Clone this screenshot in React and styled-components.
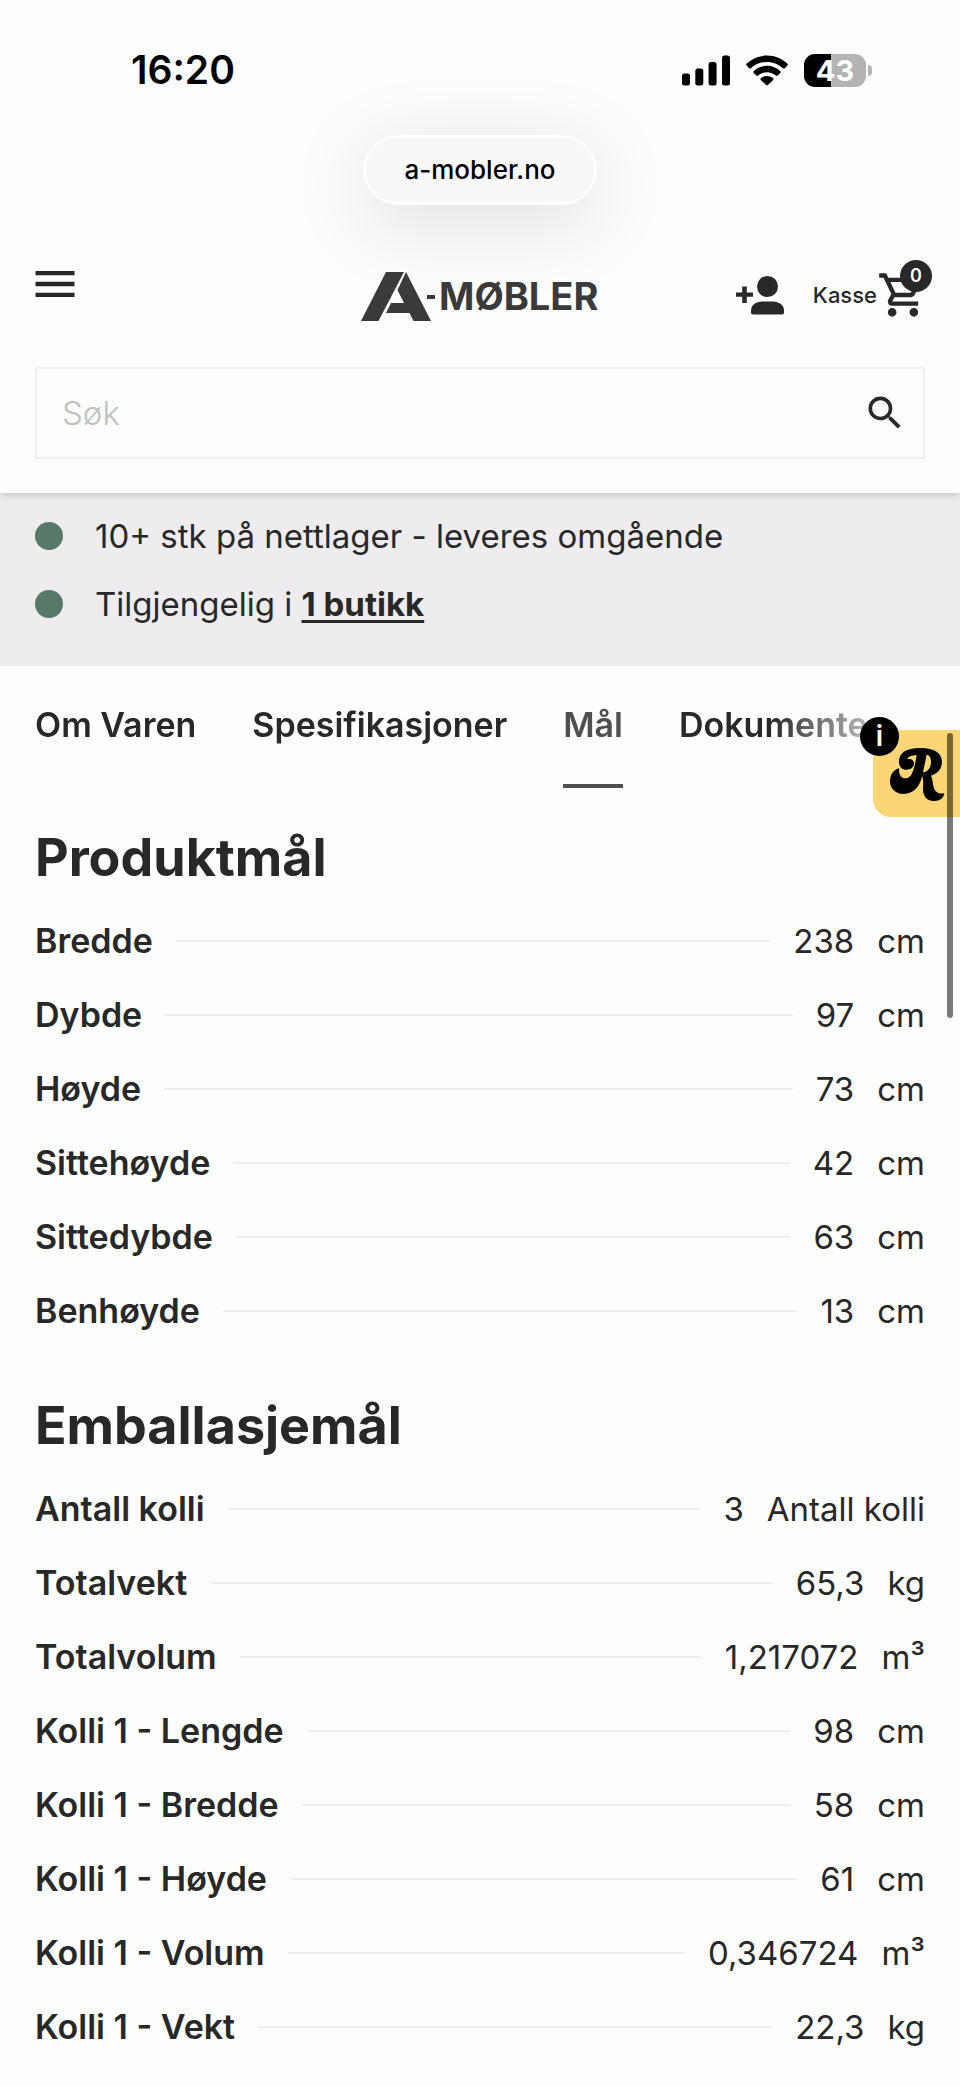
import React from "react";
import styled, { createGlobalStyle } from "styled-components";
import { MdMenu, MdOutlineShoppingCart, MdSearch } from "react-icons/md";

const color = {
    page: "#fdfdfd",
    ink: "#282828",
    muted: "#4f4f4f",
    placeholder: "#c0c0c0",
    line: "#efeff0",
    stock: "#eeecef",
    green: "#557869",
    yellow: "#fcd676",
    black: "#000000",
    white: "#ffffff",
};

const GlobalStyle = createGlobalStyle`
    *, *::before, *::after {
        box-sizing: border-box;
    }

    body {
        margin: 0;
        background-color: ${color.page};
        color: ${color.ink};
        font-family: Inter, "Liberation Sans", sans-serif;
        font-size: 33px;
        line-height: 40px;
    }

    button, input {
        font: inherit;
        color: inherit;
    }
`;

const Page = styled.div`
    position: relative;
    overflow: hidden;
`;

/** Phone status bar with the clock and the indicators. */
const StatusBar = styled.div`
    display: flex;
    align-items: center;
    justify-content: space-between;
    height: 140px;
    padding: 0 88px 0 131px;
`;

const Clock = styled.time`
    color: ${color.black};
    font-size: 39px;
    font-weight: 600;
`;

const Indicators = styled.div`
    display: flex;
    align-items: center;
    gap: 16px;
`;

const Battery = styled.div`
    display: flex;
    align-items: center;
    gap: 2px;

    &::after {
        content: "";
        width: 4px;
        height: 11px;
        border-radius: 0 6px 6px 0;
        background-color: #b4b4b4;
    }
`;

const BatteryLevel = styled.span`
    width: 62px;
    height: 33px;
    border-radius: 11px;
    background: linear-gradient(
        to right,
        ${color.black} ${(props) => props.$level}%,
        #b4b4b4 ${(props) => props.$level}%
    );
    color: ${color.white};
    font-size: 29px;
    font-weight: 700;
    line-height: 33px;
    text-align: center;
`;

/** Floating address pill of the browser. */
const AddressBar = styled.div`
    display: flex;
    justify-content: center;
    margin-top: -5px;
`;

const Address = styled.span`
    padding: 12px 38px;
    border: 3px solid ${color.white};
    border-radius: 35px;
    background-color: #f8f8f8;
    box-shadow: 0 16px 80px rgba(0, 0, 0, 0.13);
    color: ${color.black};
    font-size: 26px;
    font-weight: 500;
`;

const Header = styled.header`
    position: relative;
    padding: 53px 35px 34px;
    box-shadow: 0 2px 8px rgba(0, 0, 0, 0.18);
    /** Only let the shadow fall below the header */
    clip-path: inset(0 0 -14px 0);
`;

const HeaderRow = styled.div`
    display: grid;
    grid-template-columns: 1fr auto 1fr;
    align-items: center;
    height: 77px;
`;

const IconButton = styled.button`
    display: flex;
    width: fit-content;
    padding: 0;
    border: 0;
    background: none;
    cursor: pointer;
`;

const MenuButton = styled(IconButton)`
    margin-left: -6px;
    align-self: start;
`;

const LogoLink = styled.a`
    display: flex;
`;

const HeaderActions = styled.div`
    display: flex;
    align-items: center;
    justify-content: flex-end;
    gap: 28px;
    padding-bottom: 4px;
`;

const CartLink = styled.a`
    position: relative;
    display: flex;
    align-items: center;
    margin-right: -4px;
    color: inherit;
    font-size: 22px;
    font-weight: 500;
    text-decoration: none;
`;

const CartCount = styled.span`
    position: absolute;
    top: -9px;
    right: -3px;
    width: 32px;
    height: 32px;
    border-radius: 50%;
    background-color: ${color.ink};
    color: ${color.white};
    font-size: 18px;
    font-weight: 600;
    line-height: 32px;
    text-align: center;
`;

const SearchForm = styled.form`
    display: flex;
    align-items: center;
    height: 92px;
    margin-top: 32px;
    padding: 0 16px 0 25px;
    border: 2px solid ${color.line};
`;

const SearchInput = styled.input`
    flex: 1;
    min-width: 0;
    padding: 0;
    border: 0;
    outline: none;
    background: none;
    font-weight: 300;

    &::placeholder {
        color: ${color.placeholder};
        opacity: 1;
    }
`;

const StockList = styled.ul`
    display: grid;
    gap: 28px;
    margin: 0;
    padding: 23px 35px 42px;
    background-color: ${color.stock};
    list-style: none;
`;

const StockItem = styled.li`
    display: flex;
    align-items: center;
    gap: 32px;

    &::before {
        content: "";
        width: 28px;
        height: 28px;
        border-radius: 50%;
        background-color: ${color.green};
    }
`;

const StoreLink = styled.a`
    color: inherit;
    font-weight: 700;
    text-decoration-thickness: 3px;
    text-underline-offset: 4px;
`;

/** Tab row that fades out where it runs off the screen. */
const Tabs = styled.nav`
    display: flex;
    gap: 56px;
    padding: 39px 35px 0;
    overflow: hidden;
    mask-image: linear-gradient(to right, #000 calc(100% - 190px), transparent calc(100% - 45px));
`;

const Tab = styled.a`
    padding-bottom: 39px;
    border-bottom: 4px solid ${(props) => (props.$active ? color.muted : "transparent")};
    color: ${(props) => (props.$active ? color.muted : color.ink)};
    font-size: 34px;
    font-weight: 600;
    text-decoration: none;
    white-space: nowrap;
`;

const Measurements = styled.section`
    padding: 34px 35px 8px;
`;

const Title = styled.h2`
    margin: 0 0 10px;
    font-size: 52px;
    font-weight: 700;
    line-height: 72px;
`;

const SpecList = styled.dl`
    margin: 0;
`;

const SpecRow = styled.div`
    display: flex;
    align-items: center;
    gap: 23px;
    height: 74px;
`;

const SpecName = styled.dt`
    font-size: 34px;
    font-weight: 600;
`;

const Leader = styled.span`
    flex: 1;
    height: 2px;
    background-color: ${color.line};
`;

const SpecValue = styled.dd`
    display: flex;
    gap: 23px;
    margin: 0;
`;

/** Review badge stuck to the right edge. */
const ReviewBadge = styled.button`
    position: absolute;
    top: 730px;
    right: 0;
    width: 87px;
    height: 87px;
    padding: 0;
    border: 0;
    border-radius: 18px 0 0 18px;
    background-color: ${color.yellow};
`;

const InfoDot = styled.span`
    position: absolute;
    top: -13px;
    left: -13px;
    width: 39px;
    height: 39px;
    border-radius: 50%;
    background-color: ${color.black};
    color: ${color.white};
    font-size: 28px;
    font-weight: 600;
    line-height: 39px;
    text-align: center;
`;

const ScrollThumb = styled.div`
    position: absolute;
    top: 733px;
    right: 7px;
    width: 6px;
    height: 285px;
    border-radius: 3px;
    background-color: rgba(0, 0, 0, 0.52);
`;

const SignalIcon = () => (
    <svg width="48" height="31" viewBox="0 0 48 31" aria-hidden="true">
        <rect x="0" y="18.5" width="8" height="12" rx="2.5" />
        <rect x="13.3" y="13.5" width="8" height="17" rx="2.5" />
        <rect x="26.6" y="7" width="8" height="23.5" rx="2.5" />
        <rect x="40" y="0.5" width="8" height="30" rx="2.5" />
    </svg>
);

const WifiIcon = () => (
    <svg width="42" height="31" viewBox="0 0 42 31" aria-hidden="true">
        <path d="M21 .5C13 .5 6 3.600.7 8.600c-.6.600-.6 1.300-.1 1.900l2.600 2.700c.5.500 1.200.5 1.800 0C9.300 9.200 14.800 6.900 21 6.900s11.700 2.300 16 6.300c.6.500 1.300.5 1.800 0l2.600-2.700c.5-.6.5-1.300-.1-1.900C36 3.600 29 .5 21 .5z" />
        <path d="M21 10.800c-5.100 0-9.700 2-13.200 5.200-.6.600-.6 1.300-.1 1.900l2.700 2.700c.5.500 1.200.5 1.800 0 2.300-2.100 5.400-3.400 8.800-3.400s6.500 1.300 8.800 3.400c.6.500 1.300.5 1.800 0l2.700-2.700c.5-.6.5-1.300-.1-1.900-3.500-3.200-8.100-5.200-13.200-5.200z" />
        <path d="M21 21c-2.300 0-4.400.8-6.100 2.200-.6.500-.6 1.200-.1 1.700l5.300 5.200c.5.500 1.300.5 1.800 0l5.300-5.200c.5-.5.5-1.200-.1-1.700C25.400 21.800 23.300 21 21 21z" />
    </svg>
);

const Logo = () => (
    <svg width="238" height="52" viewBox="0 0 238 52" fill="#3a3a3a" role="img" aria-label="A-Møbler">
        <path d="M25 1h18L17.500 50H0z" />
        <path d="M45 1l25 49H52.500l-4-8H25l5-10h13l-6.500-13z" />
        <rect x="66" y="24" width="8" height="4" />
        <text x="78" y="39" fontSize="38" fontWeight="700">MØBLER</text>
    </svg>
);

const AddUserIcon = () => (
    <svg width="49" height="40" viewBox="0 0 49 40" fill="currentColor" aria-hidden="true">
        <path d="M6.200 11.500h4.600v6H17v4.300h-6.200V28H6.200v-6.200H0v-4.300h6.200z" />
        <circle cx="31.500" cy="11.500" r="10.500" />
        <path d="M15 35.500C15 30 20 26.500 26 26.500h11c6 0 11 3.500 11 9v2c0 1.100-.9 2-2 2H17c-1.100 0-2-.9-2-2z" />
    </svg>
);

const ReviewMark = () => (
    <svg width="87" height="87" viewBox="39 60 261 261" aria-hidden="true">
        <path
            fillRule="evenodd"
            d="M117 158c-2-28 20-44 62-44 42-1 66 14 67 41 0 20-12 36-33 42 5 8 4 18 7 30 3 15 12 27 33 23-2 16-16 24-32 23-22-1-32-15-32-36 0-14 3-26-3-39-5 31-26 53-55 54-25 0-41-16-41-38 0-21 12-36 28-39-3 14 3 29 18 30 21 1 27-31 34-69-14 0-27 4-28 12 9-4 20 1 20 12 0 12-10 19-22 19-13 0-22-8-23-21zM200 134l-11 53c17-2 24-16 24-32 0-12-4-19-13-21z"
        />
    </svg>
);

const tabs = ["Om Varen", "Spesifikasjoner", "Mål", "Dokumenter"];

const sections = [
    {
        title: "Produktmål",
        specs: [
            ["Bredde", "238", "cm"],
            ["Dybde", "97", "cm"],
            ["Høyde", "73", "cm"],
            ["Sittehøyde", "42", "cm"],
            ["Sittedybde", "63", "cm"],
            ["Benhøyde", "13", "cm"],
        ],
    },
    {
        title: "Emballasjemål",
        specs: [
            ["Antall kolli", "3", "Antall kolli"],
            ["Totalvekt", "65,3", "kg"],
            ["Totalvolum", "1,217072", "m³"],
            ["Kolli 1 - Lengde", "98", "cm"],
            ["Kolli 1 - Bredde", "58", "cm"],
            ["Kolli 1 - Høyde", "61", "cm"],
            ["Kolli 1 - Volum", "0,346724", "m³"],
            ["Kolli 1 - Vekt", "22,3", "kg"],
        ],
    },
];

export default function App() {
    return (
        <Page>
            <GlobalStyle />
            <StatusBar>
                <Clock>16:20</Clock>
                <Indicators>
                    <SignalIcon />
                    <WifiIcon />
                    <Battery>
                        <BatteryLevel $level={44}>43</BatteryLevel>
                    </Battery>
                </Indicators>
            </StatusBar>
            <AddressBar>
                <Address>a-mobler.no</Address>
            </AddressBar>

            <Header>
                <HeaderRow>
                    <MenuButton type="button" aria-label="Meny">
                        <MdMenu size={52} />
                    </MenuButton>
                    <LogoLink href="#hjem">
                        <Logo />
                    </LogoLink>
                    <HeaderActions>
                        <IconButton type="button" aria-label="Ny bruker">
                            <AddUserIcon />
                        </IconButton>
                        <CartLink href="#kasse">
                            Kasse
                            <MdOutlineShoppingCart size={52} />
                            <CartCount>0</CartCount>
                        </CartLink>
                    </HeaderActions>
                </HeaderRow>
                <SearchForm role="search">
                    <SearchInput type="search" aria-label="Søk" placeholder="Søk" />
                    <IconButton type="submit" aria-label="Søk">
                        <MdSearch size={44} />
                    </IconButton>
                </SearchForm>
            </Header>

            <StockList>
                <StockItem>10+ stk på nettlager - leveres omgående</StockItem>
                <StockItem>
                    <span>
                        Tilgjengelig i <StoreLink href="#butikk">1 butikk</StoreLink>
                    </span>
                </StockItem>
            </StockList>

            <Tabs>
                {tabs.map((tab) => (
                    <Tab key={tab} href="#maal" $active={tab === "Mål"}>
                        {tab}
                    </Tab>
                ))}
            </Tabs>

            {sections.map(({ title, specs }) => (
                <Measurements key={title}>
                    <Title>{title}</Title>
                    <SpecList>
                        {specs.map(([name, value, unit]) => (
                            <SpecRow key={name}>
                                <SpecName>{name}</SpecName>
                                <Leader />
                                <SpecValue>
                                    <span>{value}</span>
                                    <span>{unit}</span>
                                </SpecValue>
                            </SpecRow>
                        ))}
                    </SpecList>
                </Measurements>
            ))}

            <ReviewBadge type="button" aria-label="Omtaler">
                <ReviewMark />
                <InfoDot>i</InfoDot>
            </ReviewBadge>
            <ScrollThumb />
        </Page>
    );
}
